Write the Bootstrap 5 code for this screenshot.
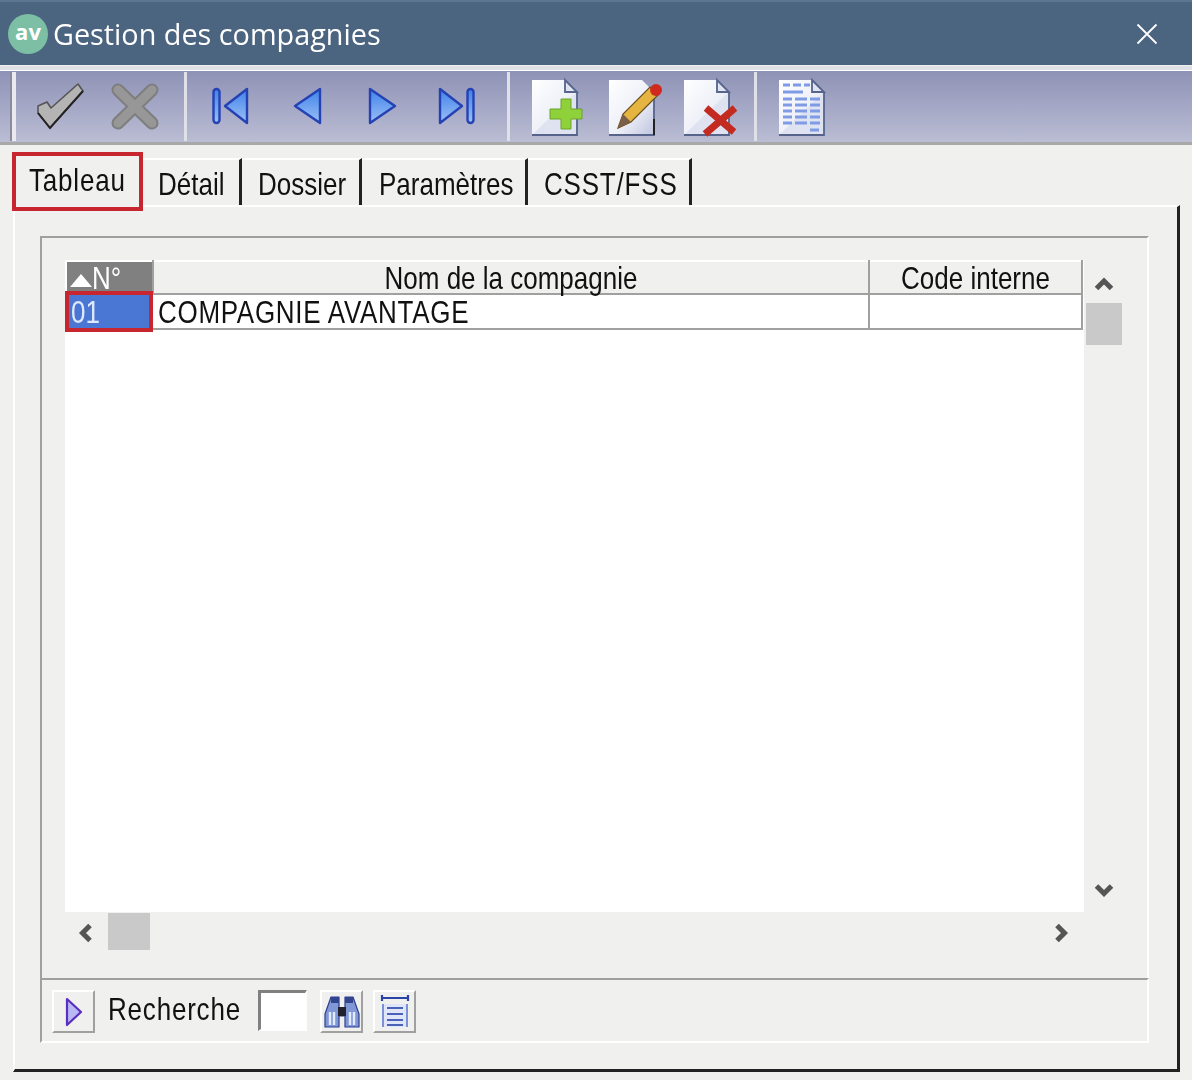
<!DOCTYPE html>
<html lang="fr">
<head>
<meta charset="utf-8">
<title>Gestion des compagnies</title>
<link rel="stylesheet" href="https://cdn.jsdelivr.net/npm/bootstrap@5.3.0/dist/css/bootstrap.min.css">
<style>
html,body{margin:0;background:#f0f0ef;}
.app-win{width:1192px;height:1080px;overflow:hidden;background:#f0f0ef;font-family:"Liberation Sans",sans-serif;font-size:26px;color:#111;}
.text-soft{display:inline-block;transform:scaleY(1.22);filter:blur(.45px);white-space:nowrap;}
.wide-a{letter-spacing:.8px;}
.title-bar{height:65px;background:#4b6580;border-top:2px solid #5b768f;color:#fff;padding-left:8px;font-family:"Open Sans",sans-serif;font-size:28.8px;}
.title-text{margin-top:1px;filter:blur(.3px);}
.logo-disc{width:40px;height:40px;border-radius:50%;background:#7cbfa4;color:#fff;font-weight:700;font-size:22px;line-height:1;margin-right:5px;padding-bottom:5px;flex:none;}
.title-close{margin-left:auto;margin-right:34px;}
.tool-strip{margin-top:5px;height:75px;background:linear-gradient(#8e92b6,#bbbdd4);border-top:1px solid #fff;border-bottom:3px solid #a9a9a9;box-shadow:0 -4px 0 #dfe1e6;padding-left:10px;}
.grip-bar{width:6px;height:69px;background:#e9e9ee;border-left:2px solid #8a8aa0;align-self:center;margin-right:6px;flex:none;}
.sep-bar{width:3px;height:69px;background:#dfe0e8;align-self:center;flex:none;}
.sep-one{margin:0 5px 0 10px;}
.sep-two{margin:0 10px 0 11px;}
.sep-three{margin:0 7px 0 6px;}
.tool-ico{display:block;width:76px;height:75px;flex:none;filter:blur(.5px);}
.tab-row{height:60px;padding-left:12px;}
.tab-on{width:131px;height:59px;margin-top:7px;border:4px solid #c8262e;padding:0 0 4px 13px;line-height:1;position:relative;z-index:2;background:#f0f0ef;}
.tab-off{height:47px;margin-top:13px;border-top:2px solid #fff;border-right:3px solid #222;line-height:1;padding-top:3px;}
.tab-a{width:99px;padding-left:15px;}
.tab-b{width:120px;padding-left:16px;}
.tab-c{width:166px;padding-left:17px;}
.tab-d{width:164px;padding-left:16px;}
.tab-pane-box{margin-left:13px;width:1167px;height:867px;border-top:2px solid #fff;border-left:2px solid #fff;border-right:3px solid #222;border-bottom:3px solid #222;padding:29px 28px 0 25px;}
.group-top{height:742px;border-top:2px solid #a0a0a0;border-left:2px solid #a0a0a0;border-right:2px solid #fff;padding:22px 0 0 23px;}
.grid-row{height:652px;}
.grid-sheet{width:1019px;background:#fff;}
.data-grid{table-layout:fixed;width:1016px;border-collapse:collapse;margin:0;line-height:1;color:#111;}
.col-num{width:87px;}.col-name{width:716px;}.col-code{width:213px;}
.data-grid th,.data-grid td{padding:0;font-weight:400;overflow:visible;white-space:nowrap;}
.data-grid thead th{height:33px;background:#f0f0ef;border-top:2px solid #fff;border-right:2px solid #a0a0a0;border-bottom:2px solid #a0a0a0;text-align:center;}
.data-grid th .text-soft{margin-top:-2px;}
.data-grid th.sort-col{background:#808080;color:#fff;text-align:left;padding-left:3px;border-left:2px solid #fff;}
.sort-tri{display:inline-block;width:0;height:0;border-left:11px solid transparent;border-right:11px solid transparent;border-bottom:13px solid #fff;vertical-align:0;}
.data-grid tbody td{height:35px;background:#fff;border-right:2px solid #a0a0a0;border-bottom:2px solid #a0a0a0;padding-left:5px;}
.data-grid tbody td.pick-cell{position:relative;background:#4a76d4;color:#dfe8ff;padding-left:5px;border:0;}
.pick-cell::after{content:"";position:absolute;left:-1px;top:-4px;right:0;bottom:-3px;border:4px solid #c8262e;}
.caps-text{letter-spacing:.7px;}
.v-scroll{width:40px;}
.v-up{margin:14px auto 8px;}
.v-down{margin:auto auto 12px;}
.v-thumb{width:36px;height:42px;margin:0 0 0 2px;background:#c9c9c9;}
.h-scroll{height:40px;width:1019px;}
.h-left{margin:2px 5px 0 11px;}
.h-right{margin:2px 13px 0 auto;}
.h-thumb{width:42px;height:37px;background:#c9c9c9;margin:1px 0 0 7px;align-self:flex-start;}
.group-bottom{height:65px;border-top:2px solid #a0a0a0;border-left:2px solid #a0a0a0;border-right:2px solid #fff;border-bottom:2px solid #fff;padding:10px 0 0 10px;}
.small-btn{width:43px;height:43px;border-top:2px solid #fff;border-left:2px solid #fff;border-right:2px solid #a0a0a0;border-bottom:2px solid #a0a0a0;flex:none;}
.small-btn svg{display:block;filter:blur(.4px);}
.find-label{margin-left:13px;width:150px;height:41px;line-height:1;padding-bottom:4px;}
.find-box{width:49px;height:41px;background:#fff;border-top:3px solid #808080;border-left:3px solid #808080;border-right:2px solid #fff;border-bottom:2px solid #fff;margin-right:13px;}
.gap-fix{margin-left:10px;}
.defs-only{width:0;height:0;position:absolute;}
</style>
</head>
<body>
<div class="app-win d-flex flex-column">
  <header class="title-bar d-flex align-items-center">
    <div class="logo-disc d-flex align-items-center justify-content-center">av</div>
    <span class="title-text">Gestion des compagnies</span>
    <svg class="title-close" width="22" height="22" viewBox="0 0 22 22"><path d="M1.500 1.500 20.500 20.500M20.500 1.500 1.500 20.500" stroke="#fff" stroke-width="1.800" fill="none"/></svg>
  </header>

  <svg class="defs-only" aria-hidden="true">
    <defs>
      <linearGradient id="nav" x1="0" y1="0" x2="0" y2="1"><stop offset="0" stop-color="#3f82ea"/><stop offset="1" stop-color="#9cc0f5"/></linearGradient>
      <linearGradient id="pg" x1="0" y1="0" x2="1" y2="1"><stop offset="0" stop-color="#fff"/><stop offset=".55" stop-color="#eef0f8"/><stop offset="1" stop-color="#bfc4de"/></linearGradient>
    </defs>
  </svg>

  <div class="tool-strip d-flex">
    <div class="grip-bar"></div>
    <svg class="tool-ico" viewBox="22 70 76 75"><path d="M38 105 47 101 51 107 78 83 83 90 50 127 38 112Z" fill="#b4b4b4" stroke="#555" stroke-width="1.600" stroke-linejoin="round"/><path d="M83 90 50 127 38 112" fill="none" stroke="#222" stroke-width="2"/></svg>
    <svg class="tool-ico" viewBox="98 70 76 75"><path d="M118 89 152 122M152 89 118 122" stroke="#7e7e7e" stroke-width="13" stroke-linecap="round"/><path d="M118 89 152 122M152 89 118 122" stroke="#979797" stroke-width="9" stroke-linecap="round"/></svg>
    <div class="sep-bar sep-one"></div>
    <svg class="tool-ico" viewBox="192 70 76 75"><rect x="213.500" y="88" width="6" height="34" rx="3" fill="url(#nav)" stroke="#2442b4" stroke-width="2.400"/><path d="M225 105 247 88V122Z" fill="url(#nav)" stroke="#2442b4" stroke-width="2.400" stroke-linejoin="round"/></svg>
    <svg class="tool-ico" viewBox="268 70 76 75"><path d="M295 105 320 88V122Z" fill="url(#nav)" stroke="#2442b4" stroke-width="2.400" stroke-linejoin="round"/></svg>
    <svg class="tool-ico" viewBox="344 70 76 75"><path d="M395 105 370 88V122Z" fill="url(#nav)" stroke="#2442b4" stroke-width="2.400" stroke-linejoin="round"/></svg>
    <svg class="tool-ico" viewBox="420 70 76 75"><path d="M462 105 440 88V122Z" fill="url(#nav)" stroke="#2442b4" stroke-width="2.400" stroke-linejoin="round"/><rect x="467.500" y="88" width="6" height="34" rx="3" fill="url(#nav)" stroke="#2442b4" stroke-width="2.400"/></svg>
    <div class="sep-bar sep-two"></div>
    <svg class="tool-ico" viewBox="520 70 76 75"><path d="M532 79H565L577 91V134H532Z" fill="url(#pg)"/><path d="M577 91V134H532M565 79 577 91H565Z" fill="#dfe2f0" stroke="#56648c" stroke-width="1.800"/><path d="M561 98H571V108H582V118H571V128H561V118H550V108H561Z" fill="#8fd13a" stroke="#6aa32a"/></svg>
    <svg class="tool-ico" viewBox="596 70 76 75"><path d="M609 79H642L654 91V134H609Z" fill="url(#pg)"/><path d="M654 91V134H609" fill="none" stroke="#56648c" stroke-width="1.800"/><path d="M654 118V134" stroke="#222" stroke-width="2"/><path d="M618 127 623 113 650 86 658 94 631 121Z" fill="#e6b441" stroke="#6a4f1c" stroke-width="1.200"/><path d="M618 127 623 113 631 121Z" fill="#7a6048"/><circle cx="656" cy="89" r="6" fill="#cf2a1d"/></svg>
    <svg class="tool-ico" viewBox="672 70 76 75"><path d="M684 79H717L729 91V134H684Z" fill="url(#pg)"/><path d="M729 91V134H684M717 79 729 91H717Z" fill="#dfe2f0" stroke="#56648c" stroke-width="1.800"/><path d="M705 133 735 107M706 107 734 131" stroke="#c32a20" stroke-width="7"/></svg>
    <div class="sep-bar sep-three"></div>
    <svg class="tool-ico" viewBox="764 70 76 75"><path d="M779 79H812L824 91V134H779Z" fill="url(#pg)"/><path d="M824 91V134H779M812 79 824 91H812Z" fill="#dfe2f0" stroke="#56648c" stroke-width="1.800"/><path d="M783 84H790M793 84H801M804 84H810M783 91H803M783 98H792M795 98H807M810 98H820M783 104H792M795 104H807M810 104H820M783 110H792M795 110H807M810 110H820M783 116H792M795 116H807M810 116H820M783 122H792M795 122H807M810 122H820M810 129H819" stroke="#7f9be6" stroke-width="3"/></svg>
  </div>

  <nav class="tab-row d-flex align-items-start">
    <div class="tab-on d-flex align-items-center"><span class="text-soft wide-a">Tableau</span></div>
    <div class="tab-off tab-a d-flex align-items-center"><span class="text-soft">Détail</span></div>
    <div class="tab-off tab-b d-flex align-items-center"><span class="text-soft">Dossier</span></div>
    <div class="tab-off tab-c d-flex align-items-center"><span class="text-soft">Paramètres</span></div>
    <div class="tab-off tab-d d-flex align-items-center"><span class="text-soft wide-a">CSST/FSS</span></div>
  </nav>

  <main class="tab-pane-box">
    <section class="group-top">
      <div class="grid-row d-flex">
        <div class="grid-sheet">
          <table class="data-grid">
            <colgroup><col class="col-num"><col class="col-name"><col class="col-code"></colgroup>
            <thead><tr><th class="sort-col"><span class="sort-tri"></span><span class="text-soft">N°</span></th><th><span class="text-soft">Nom de la compagnie</span></th><th><span class="text-soft">Code interne</span></th></tr></thead>
            <tbody><tr><td class="pick-cell"><span class="text-soft">01</span></td><td><span class="text-soft caps-text">COMPAGNIE AVANTAGE</span></td><td></td></tr></tbody>
          </table>
        </div>
        <div class="v-scroll d-flex flex-column">
          <svg class="d-block v-up" width="20" height="21" viewBox="0 0 20 21"><path d="M2.500 14.500 10 7 17.500 14.500" fill="none" stroke="#555" stroke-width="5"/></svg>
          <div class="v-thumb"></div>
          <svg class="d-block v-down" width="20" height="20" viewBox="0 0 20 20"><path d="M2.500 6 10 13.500 17.500 6" fill="none" stroke="#555" stroke-width="5"/></svg>
        </div>
      </div>
      <div class="h-scroll d-flex align-items-center">
        <svg class="d-block h-left" width="20" height="20" viewBox="0 0 20 20"><path d="M14 2.500 6.500 10 14 17.500" fill="none" stroke="#555" stroke-width="5"/></svg>
        <div class="h-thumb"></div>
        <svg class="d-block h-right" width="20" height="20" viewBox="0 0 20 20"><path d="M6 2.500 13.500 10 6 17.500" fill="none" stroke="#555" stroke-width="5"/></svg>
      </div>
    </section>
    <section class="group-bottom d-flex align-items-start">
      <div class="small-btn d-flex align-items-center justify-content-center">
        <svg width="20" height="30" viewBox="0 0 20 30"><path d="M3 2 17 15 3 28Z" fill="#b8b8f4" stroke="#5a2fc0" stroke-width="2.200" stroke-linejoin="round"/></svg>
      </div>
      <div class="find-label d-flex align-items-center"><span class="text-soft wide-a">Recherche</span></div>
      <div class="find-box"></div>
      <div class="small-btn d-flex align-items-center justify-content-center">
        <svg width="38" height="36" viewBox="0 0 38 36"><path d="M8 3H16V14H22V3H30L36 20V33H22V22H16V33H2V20Z" fill="#8097d8" stroke="#2b3f8c" stroke-width="1.200" stroke-linejoin="round"/><path d="M15 13H23V22H15Z" fill="#22222e"/><path d="M7 18V31M11 18V31M27 18V31M31 18V31" stroke="#e4ebfa" stroke-width="2.400"/><path d="M8 3H16V9H8ZM22 3H30V9H22Z" fill="#33458f"/></svg>
      </div>
      <div class="small-btn gap-fix d-flex align-items-center justify-content-center">
        <svg width="34" height="36" viewBox="0 0 34 36"><path d="M4 10H30V33H4Z" fill="#dfe6fa"/><path d="M4 4H30M4 1V7M30 1V7" stroke="#2a45a8" stroke-width="2.200" fill="none"/><path d="M5 10V33M29 10V33" stroke="#7a90d8" stroke-width="2"/><path d="M9 14H25M9 20H25M9 26H25M9 31H25" stroke="#4a63b8" stroke-width="2"/></svg>
      </div>
    </section>
  </main>
</div>
</body>
</html>
